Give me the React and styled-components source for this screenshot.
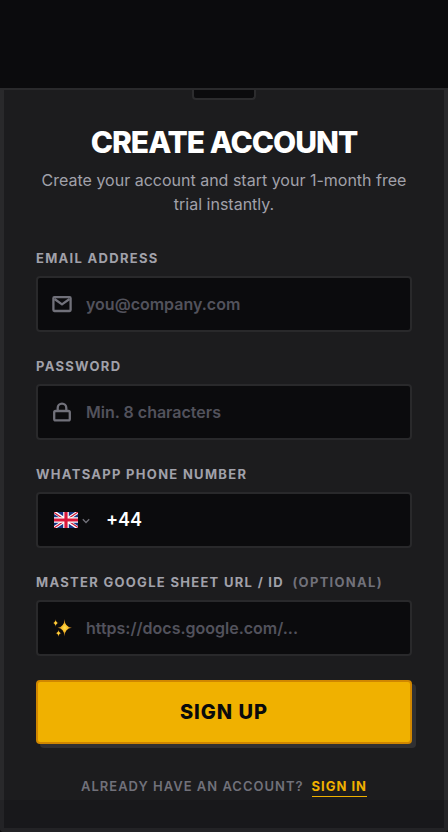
import React from "react";
import styled, { createGlobalStyle } from "styled-components";

const GlobalStyle = createGlobalStyle`
  *, *::before, *::after { box-sizing: border-box; }
  body {
    margin: 0;
    background: #0b0b0d;
    color: #ffffff;
    font-family: Inter, "Liberation Sans", sans-serif;
    -webkit-font-smoothing: antialiased;
  }
  button, input, select { font: inherit; color: inherit; }
`;

const Page = styled.div`
  position: relative;
  display: flex;
  flex-direction: column;
  min-height: 100vh;
`;

const TopBar = styled.header`
  height: 90px;
  flex-shrink: 0;
  background: #0b0b0d;
  border-bottom: 2px solid #2a2a2c;
`;

const Card = styled.main`
  flex: 1;
  padding: 0 32px 28px;
  background: #1c1c1e;
  border: 4px solid #29292b;
  border-top: 0;
  border-radius: 0 0 4px 4px;
`;

const LogoBox = styled.div`
  width: 64px;
  height: 10px;
  margin: 0 auto;
  background: #0b0b0d;
  border: 2px solid #2c2c2e;
  border-top: 0;
  border-radius: 0 0 4px 4px;
`;

const Title = styled.h1`
  margin: 24px 0 0;
  font-size: 30px;
  line-height: 36px;
  font-weight: 800;
  letter-spacing: -1px;
  text-align: center;
`;

const Subtitle = styled.p`
  margin: 8px 0 0;
  font-size: 16px;
  line-height: 24px;
  color: #a1a1aa;
  text-align: center;
`;

const Form = styled.form`
  display: flex;
  flex-direction: column;
  gap: 24px;
  margin-top: 32px;
`;

const Field = styled.div`
  display: flex;
  flex-direction: column;
  gap: 8px;
`;

const Label = styled.label`
  font-size: 13px;
  line-height: 20px;
  font-weight: 700;
  letter-spacing: 0.1em;
  text-transform: uppercase;
  color: #a1a1aa;
`;

const Optional = styled.span`
  margin-left: 4px;
  color: #71717a;
`;

const InputBox = styled.div`
  display: flex;
  align-items: center;
  gap: 14px;
  height: 56px;
  padding: 0 14px;
  background: #0b0b0d;
  border: 2px solid #29292b;
  border-radius: 4px;
  &:focus-within { border-color: #f0b100; }
`;

const Input = styled.input`
  flex: 1;
  min-width: 0;
  padding: 0;
  border: 0;
  outline: 0;
  background: transparent;
  font-size: ${(p) => (p.$large ? 18 : 16)}px;
  line-height: 24px;
  font-weight: 600;
  &::placeholder { color: #52525c; opacity: 1; }
`;

const Icon = styled.svg`
  flex-shrink: 0;
  color: #71717a;
`;

const Country = styled.div`
  position: relative;
  display: flex;
  align-items: center;
  gap: 4px;
  padding: 0 2px;
`;

const CountrySelect = styled.select`
  position: absolute;
  inset: 0;
  width: 100%;
  opacity: 0;
  cursor: pointer;
`;

const Submit = styled.button`
  height: 64px;
  border: 2px solid #d08700;
  border-radius: 4px;
  background: #f0b100;
  box-shadow: 4px 4px 0 #303032;
  color: #0a0a0c;
  font-size: 20px;
  line-height: 28px;
  font-weight: 800;
  letter-spacing: 1px;
  text-transform: uppercase;
  cursor: pointer;
`;

const Footer = styled.p`
  display: flex;
  justify-content: center;
  gap: 8px;
  margin: 32px 0 0;
  font-size: 13px;
  line-height: 20px;
  font-weight: 600;
  letter-spacing: 1px;
  text-transform: uppercase;
  color: #71717a;
`;

const SignIn = styled.a`
  color: #f0b100;
  font-weight: 700;
  text-decoration: none;
  border-bottom: 1px solid #f0b100;
`;

const BottomShade = styled.div`
  position: absolute;
  left: 0;
  right: 0;
  bottom: 0;
  height: 32px;
  background: rgba(10, 10, 12, 0.15);
  pointer-events: none;
`;

const MailIcon = () => (
  <Icon width="20" height="20" viewBox="0 0 20 20" fill="none" stroke="currentColor" strokeWidth="2.3" strokeLinejoin="round" aria-hidden="true">
    <rect x="1.4" y="3.2" width="17.2" height="13.8" rx="1" />
    <path d="M2.5 5l7.5 5.4L17.5 5" />
  </Icon>
);

const LockIcon = () => (
  <Icon width="20" height="20" viewBox="0 0 20 20" fill="none" stroke="currentColor" strokeWidth="2.3" aria-hidden="true">
    <rect x="2.2" y="9" width="15.6" height="9.4" rx="1.4" />
    <path d="M5.7 9V5.9a4.3 4.3 0 0 1 8.6 0V9" />
  </Icon>
);

const SparklesIcon = () => (
  <Icon width="20" height="20" viewBox="0 0 20 20" aria-hidden="true">
    <defs>
      <radialGradient id="spark">
        <stop offset="0" stopColor="#ffe04c" />
        <stop offset="0.4" stopColor="#f8bd2c" />
        <stop offset="1" stopColor="#8a4e12" />
      </radialGradient>
    </defs>
    <g fill="url(#spark)">
      <path d="M12.5 1Q12.8 9.2 20 9.7Q12.8 10.2 12.5 18.5Q12.2 10.2 5.5 9.7Q12.2 9.2 12.5 1Z" />
      <path d="M3.6 1Q3.8 4.7 6.8 5Q3.8 5.3 3.6 9Q3.4 5.3.6 5Q3.4 4.7 3.6 1Z" />
      <path d="M6.5 11.5Q6.7 14.9 9.5 15.2Q6.7 15.5 6.5 19Q6.3 15.5 3.5 15.2Q6.3 14.9 6.5 11.5Z" />
    </g>
  </Icon>
);

const UkFlag = () => (
  <Icon width="24" height="16" viewBox="0 0 60 40" aria-hidden="true">
    <path fill="#173485" d="M0 0h60v40H0z" />
    <path stroke="#fff" strokeWidth="8" d="M0 0l60 40M60 0L0 40" />
    <path stroke="#cf1836" strokeWidth="3" d="M0 1.5L25 18M60 38.5L35 22M60 0L35 17M0 40l25-17" />
    <path stroke="#fff" strokeWidth="14" d="M30 0v40M0 20h60" />
    <path stroke="#d8173b" strokeWidth="8" d="M30 0v40M0 20h60" />
  </Icon>
);

const ChevronIcon = () => (
  <Icon width="8" height="8" viewBox="0 0 8 8" fill="none" stroke="currentColor" strokeWidth="1.3" aria-hidden="true">
    <path d="M.8 3.3l3.2 3.2 3.2-3.2" />
  </Icon>
);

export default function App() {
  return (
    <Page>
      <GlobalStyle />
      <TopBar />
      <Card>
        <LogoBox />
        <Title>CREATE ACCOUNT</Title>
        <Subtitle>Create your account and start your 1-month free trial instantly.</Subtitle>
        <Form onSubmit={(e) => e.preventDefault()}>
          <Field>
            <Label htmlFor="email">Email Address</Label>
            <InputBox>
              <MailIcon />
              <Input id="email" type="email" placeholder="you@company.com" />
            </InputBox>
          </Field>
          <Field>
            <Label htmlFor="password">Password</Label>
            <InputBox>
              <LockIcon />
              <Input id="password" type="password" placeholder="Min. 8 characters" />
            </InputBox>
          </Field>
          <Field>
            <Label htmlFor="phone">WhatsApp Phone Number</Label>
            <InputBox>
              <Country>
                <UkFlag />
                <ChevronIcon />
                <CountrySelect aria-label="Phone number country" defaultValue="GB">
                  <option value="GB">United Kingdom</option>
                </CountrySelect>
              </Country>
              <Input id="phone" type="tel" defaultValue="+44" $large />
            </InputBox>
          </Field>
          <Field>
            <Label htmlFor="sheet">
              Master Google Sheet URL / ID <Optional>(Optional)</Optional>
            </Label>
            <InputBox>
              <SparklesIcon />
              <Input id="sheet" type="url" placeholder="https://docs.google.com/..." />
            </InputBox>
          </Field>
          <Submit type="submit">Sign Up</Submit>
        </Form>
        <Footer>
          <span>Already have an account?</span>
          <SignIn href="#signin">Sign In</SignIn>
        </Footer>
      </Card>
      <BottomShade />
    </Page>
  );
}
